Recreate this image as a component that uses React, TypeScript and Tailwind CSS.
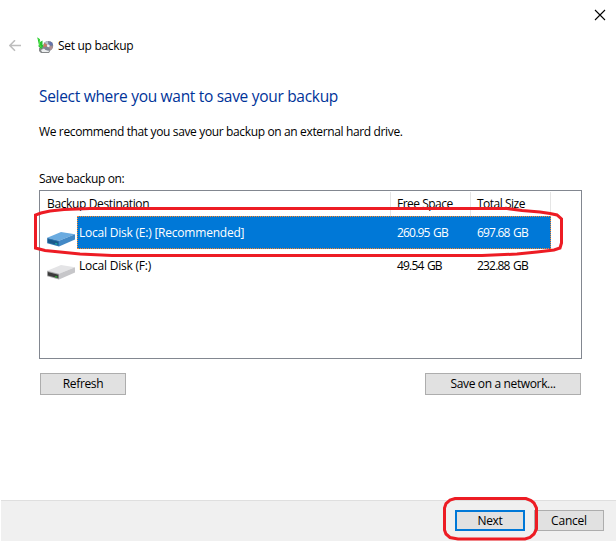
import { useState } from 'react';

const disks = [
  { id: 'E', name: 'Local Disk (E:) [Recommended]', free: '260.95 GB', total: '697.68 GB' },
  { id: 'F', name: 'Local Disk (F:)', free: '49.54 GB', total: '232.88 GB' },
];

function DriveIcon({ active }: { active: boolean }) {
  return (
    <svg width="28" height="16" viewBox="0 0 28 16" className="block">
      <path d="M0.2 6.8 L14 1 L28 3.3 L12 9.8 Z" fill={active ? '#6aabe0' : '#e4e4e6'} />
      <path d="M12 9.8 L28 3.3 V8.6 L12 15.4 Z" fill={active ? '#4389c6' : '#c6c6c9'} />
      <path d="M0.2 6.8 L12 9.8 V15.4 L0.2 12.2 Z" fill={active ? '#2f77b3' : '#a2a2a4'} />
      <path d="M0.8 8 L11.4 10.7 V14.2 L0.8 11.4 Z" fill={active ? '#195a8c' : '#3a3a3a'} />
      <path d="M8.2 12 l2.2 .6 v1.2 l-2.2 -.6 Z" fill={active ? '#1fb5a5' : '#28b52c'} />
    </svg>
  );
}

function BackupIcon() {
  return (
    <svg width="17" height="17" viewBox="0 0 17 17" className="block">
      <path d="M2 11 L5 9 H12 L14 12.5 L12 16 H4 L2 14 Z" fill="#85888a" />
      <path d="M4 13 L7 11.5 L12.5 13 L11.5 15 H5 Z" fill="#eceeef" />
      <circle cx="11.3" cy="8.8" r="4.9" fill="#7f8492" />
      <path d="M11.3 8.8 L7.5 5.7 A4.9 4.9 0 0 1 10.9 4 Z" fill="#b9c0cc" />
      <path d="M11.3 8.8 L6.8 10.3 A4.8 4.8 0 0 1 7.3 6.1 Z" fill="#c97a62" />
      <path d="M11.3 8.8 L13.3 4.5 A4.9 4.9 0 0 1 16 7.9 Z" fill="#6674ad" />
      <path d="M11.3 8.8 L16.1 9.5 A4.9 4.9 0 0 1 13.3 13.2 Z" fill="#b08f92" />
      <circle cx="11.3" cy="8.8" r="1.4" fill="#f2f3f5" />
      <path d="M0.3 0.3 L3 2.2 V5 L5.5 3.6 V8 L6.8 7.6 L4.5 12 L0.8 8.8 L2 8.5 Z" fill="#25c02f" />
      <path d="M1 1.2 L2.6 3.4 V8 L4.3 10.3" stroke="#55ec4b" strokeWidth="0.9" fill="none" />
    </svg>
  );
}

export default function App() {
  const [selected, setSelected] = useState('E');

  return (
    <div className="relative flex h-[542px] w-[616px] flex-col overflow-hidden bg-white font-['Open_Sans','Noto_Sans',sans-serif] text-[12px] leading-4 tracking-[-0.36px] text-black">
      {/* Title bar */}
      <div className="flex h-[30px] shrink-0 justify-end pr-[10px] pt-[9px]">
        <button aria-label="Close" className="h-3 w-3">
          <svg width="12" height="12" viewBox="0 0 12 12" className="block">
            <path d="M1 1 L11 11 M11 1 L1 11" stroke="#000" strokeWidth="1.1" />
          </svg>
        </button>
      </div>

      <div className="flex h-8 shrink-0 items-center pl-[9px]">
        <svg width="12" height="12" viewBox="0 0 12 12">
          <path d="M0.8 5.5 H12 M6 0.3 L0.8 5.5 L6 10.7" stroke="#bdbdbd" strokeWidth="1.6" fill="none" />
        </svg>
        <div className="-mt-px ml-4">
          <BackupIcon />
        </div>
        <span className="ml-[4px] tracking-[-0.3px]">Set up backup</span>
      </div>

      {/* Wizard page */}
      <div className="flex-1 pl-[39px] pr-[34px]">
        <h1 className="mt-[22px] text-[15.5px] leading-6 tracking-[-0.3px] text-[#003399]">
          Select where you want to save your backup
        </h1>
        <p className="mt-[16px]">We recommend that you save your backup on an external hard drive.</p>
        <p className="mt-[31px]">Save backup on:</p>

        <div className="mt-[3px] h-[169px] border border-[#828790] pl-[7px] pt-px">
          <div className="flex h-6 pt-[4px]">
            <span className="w-[343px]">Backup Destination</span>
            <div className="-mt-1 h-6 w-20 border-l border-[#e5e5e5] pl-[6px] pt-[4px] tracking-[-0.5px]">
              Free Space
            </div>
            <div className="-mt-1 h-6 w-[81px] border-x border-[#e5e5e5] pl-[6px] pt-[4px] tracking-[-0.5px]">
              Total Size
            </div>
          </div>
          {disks.map((disk) => {
            const active = disk.id === selected;
            return (
              <div key={disk.id} className="flex h-[33px]" onClick={() => setSelected(disk.id)}>
                <div className="w-[30px] pt-[15px]">
                  <DriveIcon active={active} />
                </div>
                <div
                  className={`flex w-[474px] border border-dotted pl-px pt-2 ${
                    active ? 'border-[#ff8728] bg-[#0078d7] text-white' : 'border-transparent'
                  }`}
                >
                  <span className="w-[318px] tracking-[-0.22px]">{disk.name}</span>
                  <span className="w-20 tracking-[-0.8px] [word-spacing:1px]">{disk.free}</span>
                  <span className="tracking-[-0.8px] [word-spacing:1px]">{disk.total}</span>
                </div>
              </div>
            );
          })}
        </div>

        <div className="mt-[14px] flex justify-between pl-px pr-px">
          <button className="h-[22px] w-[86px] border border-[#adadad] bg-[#e1e1e1]">Refresh</button>
          <button className="h-[22px] w-[156px] border border-[#adadad] bg-[#e1e1e1]">Save on a network...</button>
        </div>
      </div>

      {/* Footer */}
      <div className="mb-px ml-px flex h-[41px] shrink-0 justify-end gap-[9px] border-t border-[#dfdfdf] bg-[#f0f0f0] pr-3 pt-[9px]">
        <button className="h-[21px] w-[70px] border-2 border-[#0078d7] bg-[#e1e1e1] leading-[17px]">Next</button>
        <button className="h-[21px] w-[70px] border border-[#adadad] bg-[#e1e1e1] leading-[19px] tracking-[-0.22px]">
          Cancel
        </button>
      </div>

      {/* Hand-drawn highlights */}
      <svg
        width="616"
        height="542"
        viewBox="0 0 616 542"
        fill="none"
        stroke="#ed1c24"
        strokeWidth="3"
        className="pointer-events-none absolute inset-0"
      >
        <path d="M35.5 248 V215 L41 213 L50 211 L64 209.5 L90 208.5 H507 L522 210.5 L540 212 L550 213.5 L557 215 L561.5 219 V243 L560 248 L554 250 L537 252 L517 254 L482 255.5 H112 L80 254 L60 252 L45 250.5 Z" />
        <path d="M455 498.5 H526 L531 500.5 L534 503 L536.5 508 V529 L534 534 L530 537.5 L525 539 H458 L450 537.5 L446 534 L444.5 530 V508 L446 503.5 L450 500 Z" />
      </svg>
    </div>
  );
}
